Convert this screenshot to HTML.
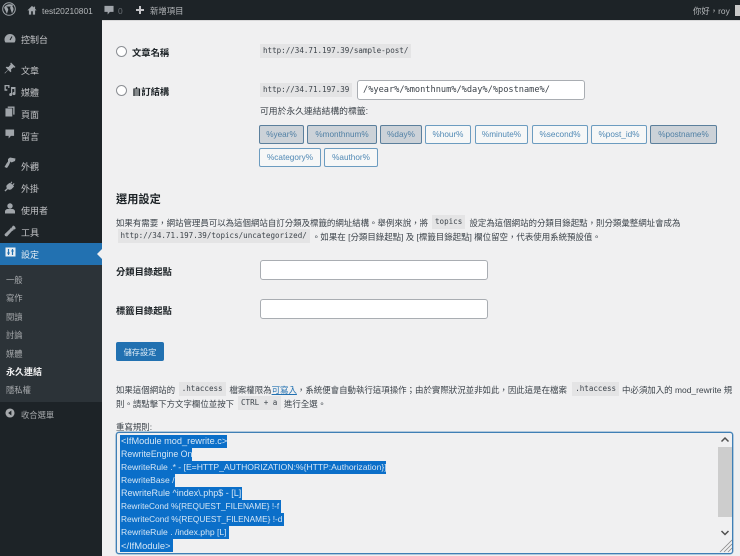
<!DOCTYPE html>
<html lang="zh-Hant"><head><meta charset="utf-8">
<style>
html,body{margin:0;padding:0;width:740px;height:556px;overflow:hidden;background:#f0f0f1}
body{font-family:"Liberation Sans","Noto Sans CJK TC",sans-serif;font-size:9px;color:#3c434a;position:relative}
.a{position:absolute;white-space:nowrap}
.m{font-family:"DejaVu Sans Mono","Liberation Mono",monospace}
#wrap{position:absolute;inset:0;filter:blur(.35px);overflow:hidden}
.bar{color:#b5b8bb;font-size:8.4px;line-height:14px;top:4px}
.nav{color:#c3c4c7;font-size:9px;line-height:14px;left:21px}
.sub{color:#a7aaad;font-size:8.3px;line-height:14px;left:6px}
.ic{position:absolute;fill:#a0a5aa}
code{position:absolute;background:#e4e4e5;font-family:"DejaVu Sans Mono","Liberation Mono",monospace;font-size:7.56px;color:#3c434a;line-height:14px;height:14px;padding:0 3px;white-space:nowrap}
.tag{position:absolute;height:19px;box-sizing:border-box;border:1px solid #6c9cc0;border-radius:2px;background:#f6f7f7;color:#4f88b4;font-size:8.2px;text-align:center;line-height:17px}
.tag.on{background:#ccd2d8;border-color:#5b7f9c;color:#4f7fa4}
.b{font-weight:bold;color:#1d2327;font-size:9.3px;line-height:14px}
.inp{position:absolute;background:#fff;border:1px solid #a9adb2;border-radius:3px;box-sizing:border-box}
.r{position:absolute;width:11px;height:11px;box-sizing:border-box;border:1px solid #8c8f94;border-radius:50%;background:#fff}
.t{font-size:8.45px;line-height:14px;color:#3c434a}
.sel{position:absolute;left:120px;background:#0b6fc9;color:#d5e6f5;font-size:8.6px;line-height:13px;height:13px;white-space:nowrap;padding-left:1px;box-sizing:border-box;overflow:hidden}
</style></head><body><div id="wrap">
<div class="a" style="left:0;top:0;width:740px;height:20px;background:#1d2327"></div>
<div class="a" style="left:0;top:20px;width:102px;height:536px;background:#1d2327"></div>
<div class="a" style="left:102px;top:20px;width:638px;height:1px;background:#d8d8d9"></div>

<svg class="ic" style="left:2px;top:2px" width="14" height="14" viewBox="0 0 20 20"><circle cx="10" cy="10" r="9" fill="none" stroke="#a0a5aa" stroke-width="1.4"/><path d="M3 8l4 9 2-6-1.500-3.500h-1V6.500h6v1h-1.200l3 9 2-5c.5-1.500 0-3-1-4.500-.8-1.200 0-2.500 1-2.500C14 2.500 6 2 3 8z"/></svg>
<svg class="ic" style="left:27px;top:5px" width="10" height="10" viewBox="0 0 12 12"><path d="M6 1L.5 6.500h1.800V11.500h2.700V7.500h2V11.500h2.700V6.500H11.500L9.700 4.700V2H8v1z"/></svg>
<div class="a bar" style="left:42px">test20210801</div>
<svg class="ic" style="left:104px;top:5px" width="10" height="10" viewBox="0 0 11 11"><path d="M.5 1h10v6.500H6.500L4 10.500V7.500H.5z"/></svg>
<div class="a bar" style="left:118px;color:#6b7075">0</div>
<svg class="ic" style="left:135px;top:5px" width="10" height="10" viewBox="0 0 10 10"><path d="M4 1h2v3h3v2H6v3H4V6H1V4h3z" fill="#c3c4c7"/></svg>
<div class="a bar" style="left:150px">新增項目</div>
<div class="a bar" style="left:693px">你好，roy</div>
<div class="a" style="left:735px;top:5px;width:5px;height:11px;background:#c9c9c9"></div>

<!-- Sidebar -->
<svg class="ic" style="left:4px;top:33px" width="12" height="11" viewBox="0 0 12 11"><path d="M6 1a5.500 5.500 0 0 0-5.500 5.500c0 1.200.3 2.200 1 3h9c.7-.8 1-1.800 1-3A5.500 5.500 0 0 0 6 1z"/><path d="M6 7L8 3.500" stroke="#1d2327" stroke-width="1"/></svg>
<div class="a nav" style="top:33px">控制台</div>
<svg class="ic" style="left:4px;top:62px" width="12" height="12" viewBox="0 0 12 12"><path d="M7 .5l4.500 4.500-1 .7-1-.4L7 7.500 7.300 9.500 6.500 10.300 4.200 8 1 11.500.5 11l3.500-3.200L1.700 5.500l.8-.8 2 .3L6.700 2.500 6.300 1.500z"/></svg>
<div class="a nav" style="top:64px">文章</div>
<svg class="ic" style="left:4px;top:84px" width="12" height="12" viewBox="0 0 12 12"><path d="M.5 1h5v3H4.200V2.300H1.800v3h1.500v1.500H.5zM7 3h4.500v6.500a1.500 1.500 0 1 1-1.200-1.400V5H8.200v5.500a1.500 1.500 0 1 1-1.200-1.400z"/></svg>
<div class="a nav" style="top:86px">媒體</div>
<svg class="ic" style="left:5px;top:106px" width="10" height="11" viewBox="0 0 11 12"><path d="M3 .5h7.500v9H9V2H3zM.5 2.500H8V11.500H.5z"/></svg>
<div class="a nav" style="top:108px">頁面</div>
<svg class="ic" style="left:5px;top:129px" width="10" height="10" viewBox="0 0 11 11"><path d="M.5.500h9.500v7H6.500L4 10.500v-3H.5z"/></svg>
<div class="a nav" style="top:130px">留言</div>
<svg class="ic" style="left:4px;top:157px" width="12" height="12" viewBox="0 0 12 12"><path d="M4 2l2-1.500 5.500 1L11 4 7.500 5.500 6.500 4.500 5 8 3 11 .5 10 2.500 6.500 4 4.500z"/></svg>
<div class="a nav" style="top:160px">外觀</div>
<svg class="ic" style="left:4px;top:181px" width="11" height="11" viewBox="0 0 12 12"><path d="M8 .5l1 .7L7.800 3l1.500 1L10.500 2.300l1 .7L10 5l1 1-3 3c-1.500.8-2.800.5-3.700-.2L1.500 11.500.5 10.500 3.200 7.800C2.500 7 2.300 5.700 3 4.500l3-2.500 .8.700z"/></svg>
<div class="a nav" style="top:182px">外掛</div>
<svg class="ic" style="left:4px;top:203px" width="12" height="11" viewBox="0 0 12 11"><circle cx="6" cy="3" r="2.700"/><path d="M1 10.500V8.500c0-1.500 1.500-2.500 2.700-2.500h4.600C9.500 6 11 7 11 8.500v2z"/></svg>
<div class="a nav" style="top:204px">使用者</div>
<svg class="ic" style="left:4px;top:225px" width="12" height="12" viewBox="0 0 12 12"><path d="M8.500.5a3 3 0 0 1 3 3.500L9.500 4.800 8 4l-.3-1.700L9 .8zM7 2.500l2.500 2.800L8 6 3 11.500l-2-.5-.5-1.800L6 4z"/></svg>
<div class="a nav" style="top:226px">工具</div>

<div class="a" style="left:0;top:243px;width:102px;height:22px;background:#2271b1"></div>
<div class="a" style="left:97px;top:249px;width:0;height:0;border:5px solid transparent;border-left:0;border-right-color:#f0f0f1"></div>
<svg style="position:absolute;left:5px;top:247px" width="11" height="10" viewBox="0 0 11 10"><rect x=".5" y=".5" width="10" height="9" fill="#e8eef3"/><path d="M3.500 2v6M2.300 6h2.400M7.500 2v6M6.300 4h2.400" stroke="#2271b1" stroke-width="1.200"/></svg>
<div class="a nav" style="top:248px;color:#e6eef5">設定</div>

<div class="a" style="left:0;top:265px;width:102px;height:137px;background:#2c3338"></div>
<div class="a sub" style="top:273px">一般</div>
<div class="a sub" style="top:291px">寫作</div>
<div class="a sub" style="top:310px">閱讀</div>
<div class="a sub" style="top:328px">討論</div>
<div class="a sub" style="top:347px">媒體</div>
<div class="a sub" style="top:365px;color:#f0f0f1;font-weight:bold;font-size:9px">永久連結</div>
<div class="a sub" style="top:383px">隱私權</div>
<svg style="position:absolute;left:5px;top:408px" width="10" height="10" viewBox="0 0 11 11"><circle cx="5.500" cy="5.500" r="5" fill="#a7aaad"/><path d="M7 2.800L3.500 5.500 7 8.200z" fill="#1d2327"/></svg>
<div class="a" style="left:21px;top:408px;color:#a7aaad;font-size:8.300px;line-height:14px">收合選單</div>

<!-- Radios -->
<div class="r" style="left:116px;top:46px"></div>
<div class="a b" style="left:132px;top:46px">文章名稱</div>
<code style="left:260px;top:44px">http://34.71.197.39/sample-post/</code>
<div class="r" style="left:116px;top:85px"></div>
<div class="a b" style="left:132px;top:85px">自訂結構</div>
<code style="left:260px;top:83px">http://34.71.197.39</code>
<div class="inp m" style="left:357px;top:80px;width:228px;height:20px;font-size:8.640px;line-height:18px;padding-left:5px;color:#3c434a">/%year%/%monthnum%/%day%/%postname%/</div>
<div class="a t" style="left:260px;top:104px;font-size:8.800px">可用於永久連結結構的標籤:</div>

<div class="tag on" style="left:259px;top:125px;width:45px">%year%</div>
<div class="tag on" style="left:307px;top:125px;width:70px">%monthnum%</div>
<div class="tag on" style="left:380px;top:125px;width:42px">%day%</div>
<div class="tag" style="left:425px;top:125px;width:46px">%hour%</div>
<div class="tag" style="left:475px;top:125px;width:53px">%minute%</div>
<div class="tag" style="left:532px;top:125px;width:56px">%second%</div>
<div class="tag" style="left:591px;top:125px;width:56px">%post_id%</div>
<div class="tag on" style="left:650px;top:125px;width:67px">%postname%</div>
<div class="tag" style="left:259px;top:148px;width:62px">%category%</div>
<div class="tag" style="left:324px;top:148px;width:54px">%author%</div>

<div class="a" style="left:116px;top:192px;font-size:11.200px;font-weight:bold;color:#1d2327;line-height:16px">選用設定</div>
<div class="a t" style="left:116px;top:216px">如果有需要，網站管理員可以為這個網站自訂分類及標籤的網址結構。舉例來說，將</div>
<code style="left:432px;top:215px">topics</code>
<div class="a t" style="left:469.500px;top:216px">設定為這個網站的分類目錄起點，則分類彙整網址會成為</div>
<code style="left:117.500px;top:229px">http://34.71.197.39/topics/uncategorized/</code>
<div class="a t" style="left:312px;top:230px">。如果在 [分類目錄起點] 及 [標籤目錄起點] 欄位留空，代表使用系統預設值。</div>

<div class="a b" style="left:116px;top:265px">分類目錄起點</div>
<div class="inp" style="left:260px;top:260px;width:228px;height:20px"></div>
<div class="a b" style="left:116px;top:304px">標籤目錄起點</div>
<div class="inp" style="left:260px;top:299px;width:228px;height:20px"></div>

<div class="a" style="left:116px;top:342px;width:48px;height:19px;background:#2271b1;border-radius:2px;color:#dcebf6;font-size:8.200px;line-height:21px;text-align:center">儲存設定</div>

<div class="a t" style="left:116px;top:383px">如果這個網站的</div>
<code style="left:178.500px;top:382px;padding:0 3.200px">.htaccess</code>
<div class="a t" style="left:229.400px;top:383px">檔案權限為<span style="color:#2271b1;text-decoration:underline">可寫入</span>，系統便會自動執行這項操作；由於實際狀況並非如此，因此這是在檔案</div>
<code style="left:572px;top:382px;padding:0 3.200px">.htaccess</code>
<div class="a t" style="left:622px;top:383px">中必須加入的 mod_rewrite 規</div>
<div class="a t" style="left:116px;top:397px">則。請點擊下方文字欄位並按下</div>
<code style="left:237.500px;top:396px;padding:0 3.500px">CTRL + a</code>
<div class="a t" style="left:284px;top:397px">進行全選。</div>
<div class="a t" style="left:116px;top:420px">重寫規則:</div>

<div class="a" style="left:116px;top:432px;width:617px;height:122px;box-sizing:border-box;border:1px solid #3f7fb5;border-radius:3px;background:#f0f0f1;box-shadow:0 0 0 .5px #6fa0c8"></div>
<div class="sel" style="top:435px;width:107px;font-size:9.200px">&lt;IfModule mod_rewrite.c&gt;</div>
<div class="sel" style="top:448px;width:72px;font-size:8.800px">RewriteEngine On</div>
<div class="sel" style="top:461px;width:266px">RewriteRule .* - [E=HTTP_AUTHORIZATION:%{HTTP:Authorization}]</div>
<div class="sel" style="top:474px;width:55px">RewriteBase /</div>
<div class="sel" style="top:487px;width:122px;font-size:9px">RewriteRule ^index\.php$ - [L]</div>
<div class="sel" style="top:500px;width:161px;font-size:8.250px">RewriteCond %{REQUEST_FILENAME} !-f</div>
<div class="sel" style="top:513px;width:164px;font-size:8.300px">RewriteCond %{REQUEST_FILENAME} !-d</div>
<div class="sel" style="top:526px;width:109px">RewriteRule . /index.php [L]</div>
<div class="sel" style="top:539px;width:53px;font-size:9.400px">&lt;/IfModule&gt;</div>

<div class="a" style="left:718px;top:447px;width:14px;height:70px;background:#cdcdcd"></div>
<svg style="position:absolute;left:718px;top:434px" width="14" height="119" viewBox="0 0 14 119"><path d="M3.500 7.500L7 4 10.500 7.500" fill="none" stroke="#505050" stroke-width="1.500"/><path d="M3.500 97L7 100.500 10.500 97" fill="none" stroke="#505050" stroke-width="1.500"/><path d="M2 118L14 106M6 118L14 110M10 118L14 114" stroke="#8a8a8a" stroke-width=".8"/></svg>
</div></body></html>
